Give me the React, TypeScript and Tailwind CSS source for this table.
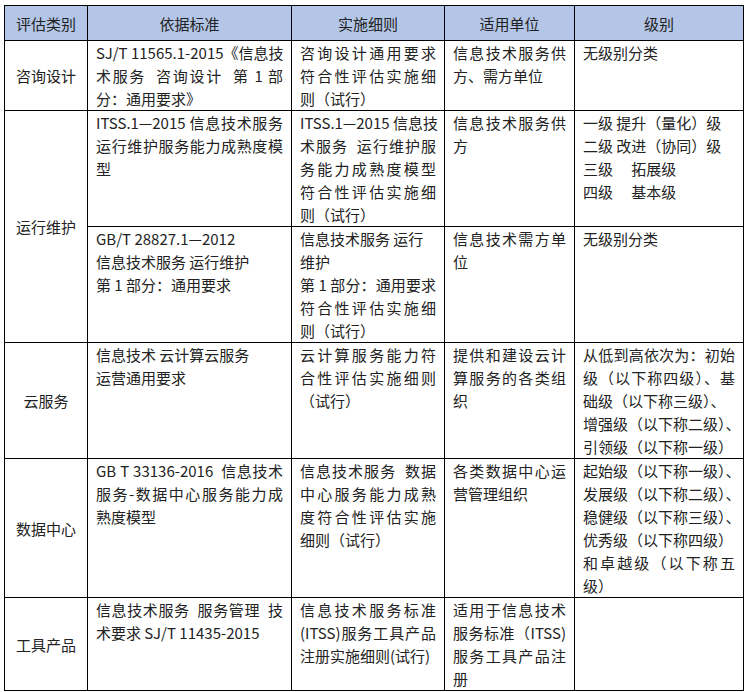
import React from "react";

type Line = [string, boolean?];

const Lines = ({ lines }: { lines: Line[] }) => (
  <>
    {lines.map(([t, j], i) => (
      <div
        key={i}
        className={
          "h-[23px] leading-[23px] whitespace-pre " +
          (j ? "text-justify [text-align-last:justify]" : "text-left")
        }
      >
        {t}
      </div>
    ))}
  </>
);

const td = "border-r border-b border-black px-[8px] py-0 align-top";
const tdc = "border-r border-b border-black px-[4px] py-0 align-middle text-center";

type RowData = { c2: Line[]; c3: Line[]; c4: Line[]; c5: Line[] };

const Cells = ({ r }: { r: RowData }) => (
  <>
    <td className={td}>
      <Lines lines={r.c2} />
    </td>
    <td className={td}>
      <Lines lines={r.c3} />
    </td>
    <td className={td}>
      <Lines lines={r.c4} />
    </td>
    <td className={td}>
      <Lines lines={r.c5} />
    </td>
  </>
);

const r1: RowData = {
  c2: [["SJ/T 11565.1-2015《信息技", true], ["术服务  咨询设计  第 1 部", true], ["分：通用要求》"]],
  c3: [["咨询设计通用要求", true], ["符合性评估实施细", true], ["则（试行）"]],
  c4: [["信息技术服务供", true], ["方、需方单位"]],
  c5: [["无级别分类"]],
};

const r2a: RowData = {
  c2: [["ITSS.1—2015 信息技术服务", true], ["运行维护服务能力成熟度模", true], ["型"]],
  c3: [
    ["ITSS.1—2015 信息技", true],
    ["术服务  运行维护服", true],
    ["务能力成熟度模型", true],
    ["符合性评估实施细", true],
    ["则（试行）"],
  ],
  c4: [["信息技术服务供", true], ["方"]],
  c5: [["一级 提升（量化）级"], ["二级 改进（协同）级"], ["三级　 拓展级"], ["四级　 基本级"]],
};

const r2b: RowData = {
  c2: [["GB/T 28827.1—2012"], ["信息技术服务 运行维护"], ["第 1 部分：通用要求"]],
  c3: [["信息技术服务 运行"], ["维护"], ["第 1 部分：通用要求", true], ["符合性评估实施细", true], ["则（试行）"]],
  c4: [["信息技术需方单", true], ["位"]],
  c5: [["无级别分类"]],
};

const r3: RowData = {
  c2: [["信息技术 云计算云服务"], ["运营通用要求"]],
  c3: [["云计算服务能力符", true], ["合性评估实施细则", true], ["（试行）"]],
  c4: [["提供和建设云计", true], ["算服务的各类组", true], ["织"]],
  c5: [
    ["从低到高依次为：初始", true],
    ["级（以下称四级）、基", true],
    ["础级（以下称三级）、"],
    ["增强级（以下称二级）、"],
    ["引领级（以下称一级）"],
  ],
};

const r4: RowData = {
  c2: [["GB T 33136-2016  信息技术", true], ["服务-数据中心服务能力成", true], ["熟度模型"]],
  c3: [["信息技术服务  数据", true], ["中心服务能力成熟", true], ["度符合性评估实施", true], ["细则（试行）"]],
  c4: [["各类数据中心运", true], ["营管理组织"]],
  c5: [
    ["起始级（以下称一级）、"],
    ["发展级（以下称二级）、"],
    ["稳健级（以下称三级）、"],
    ["优秀级（以下称四级）"],
    ["和卓越级（以下称五", true],
    ["级）"],
  ],
};

const r5: RowData = {
  c2: [["信息技术服务  服务管理  技", true], ["术要求 SJ/T 11435-2015"]],
  c3: [["信息技术服务标准", true], ["(ITSS)服务工具产品", true], ["注册实施细则(试行)"]],
  c4: [["适用于信息技术", true], ["服务标准（ITSS)", true], ["服务工具产品注", true], ["册"]],
  c5: [],
};

export default function App() {
  return (
    <div className="w-[750px] h-[692px] bg-white pl-[4px] pt-[5px] text-[#222] text-[15px] leading-[23px] font-['Noto_Sans_CJK_SC','Noto_Sans',sans-serif]">
      <table className="table-fixed border-separate border-spacing-0 border-t border-l border-black w-[740px]">
        <colgroup>
          <col className="w-[83px]" />
          <col className="w-[204px]" />
          <col className="w-[153px]" />
          <col className="w-[130px]" />
          <col className="w-[169px]" />
        </colgroup>
        <thead>
          <tr>
            {["评估类别", "依据标准", "实施细则", "适用单位", "级别"].map((h) => (
              <th
                key={h}
                className="h-[35px] bg-[#b4c6e7] border-r border-b border-black font-normal text-center align-middle p-0"
              >
                {h}
              </th>
            ))}
          </tr>
        </thead>
        <tbody>
          <tr>
            <td className={tdc}>咨询设计</td>
            <Cells r={r1} />
          </tr>
          <tr>
            <td className={tdc} rowSpan={2}>
              运行维护
            </td>
            <Cells r={r2a} />
          </tr>
          <tr>
            <Cells r={r2b} />
          </tr>
          <tr>
            <td className={tdc}>云服务</td>
            <Cells r={r3} />
          </tr>
          <tr>
            <td className={tdc}>数据中心</td>
            <Cells r={r4} />
          </tr>
          <tr>
            <td className={tdc}>工具产品</td>
            <Cells r={r5} />
          </tr>
        </tbody>
      </table>
    </div>
  );
}
